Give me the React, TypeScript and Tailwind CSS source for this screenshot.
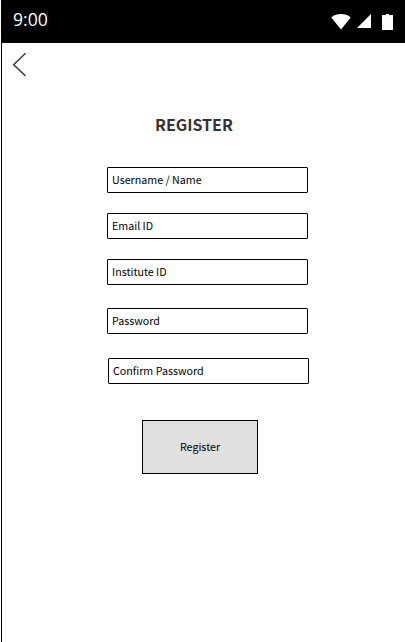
const fields = [
  { label: 'Username / Name', spacing: '' },
  { label: 'Email ID', spacing: 'mt-5' },
  { label: 'Institute ID', spacing: 'mt-5' },
  { label: 'Password', spacing: 'mt-[23px]' },
  { label: 'Confirm Password', spacing: 'mt-6 ml-px' },
];

function StatusBar() {
  return (
    <header className="flex h-[43px] items-start justify-between bg-black pr-3 pl-[11px] text-white">
      <span className="mt-[6px] font-['Open_Sans','Noto_Sans',sans-serif] text-[17.6px] leading-[26px]">9:00</span>
      <div className="mt-[14px] flex items-start">
        <svg width="20" height="16" viewBox="0 0 20 16" fill="currentColor">
          <path d="M0.3 3.4C3 1 6.3 0 10 0s7 1 9.7 3.4L10 15.4Z" />
        </svg>
        <svg className="ml-[6px]" width="14" height="14" viewBox="0 0 14 14" fill="currentColor">
          <path d="M14 0v14H0Z" />
        </svg>
        <svg className="ml-[11px]" width="11" height="16" viewBox="0 0 11 16" fill="currentColor">
          <path d="M4 0h3v1h4v15H0V1h4Z" />
        </svg>
      </div>
    </header>
  );
}

export default function App() {
  return (
    <div className="flex h-[642px] w-[405px] flex-col overflow-hidden bg-white pl-px font-['Noto_Sans_CJK_SC',sans-serif]">
      <div className="flex-1 border-l border-black">
        <StatusBar />
        <button aria-label="Back" className="mt-[9px] ml-[10px] block h-[26px] w-[16px]">
          <svg width="16" height="26" viewBox="0 0 16 26" fill="none" stroke="#444" strokeWidth="1.6">
            <path d="M13.5 1.2 1.7 12.8 13.5 23.8" />
          </svg>
        </button>
        <main className="ml-[105px] w-[202px]">
          <h1 className="mt-[33px] ml-[48px] text-[16px] leading-[26px] font-bold whitespace-nowrap text-[#333]">REGISTER</h1>
          <form className="mt-[30px]">
            {fields.map((field) => (
              <label
                key={field.label}
                className={`flex h-[26px] w-[201px] items-center rounded-[1px] border border-black pl-1 text-[10.7px] leading-4 text-black ${field.spacing}`}
              >
                {field.label}
              </label>
            ))}
            <button
              type="button"
              className="mt-9 ml-[35px] flex h-[54px] w-[116px] items-center justify-center border border-black bg-[#e0e0e0] text-[10.7px] leading-4 text-black"
            >
              Register
            </button>
          </form>
        </main>
      </div>
    </div>
  );
}
